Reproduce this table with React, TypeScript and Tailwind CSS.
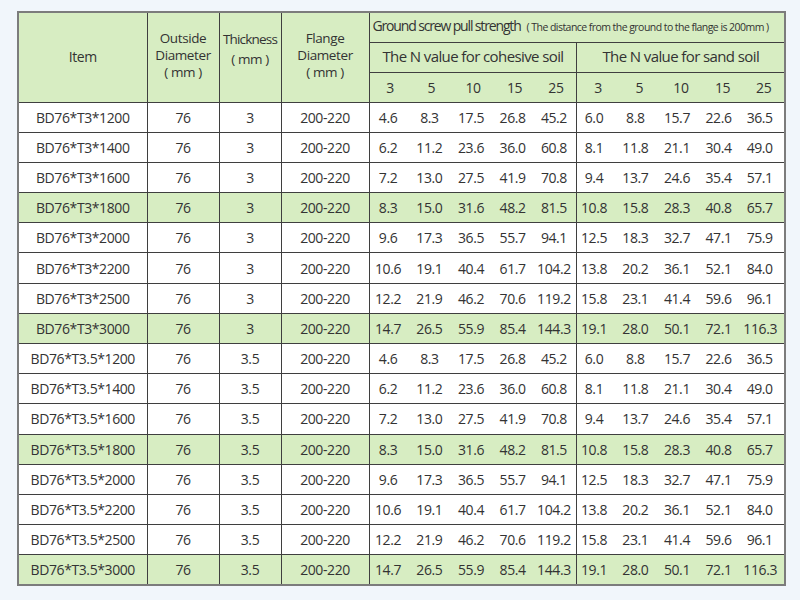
import * as React from 'react';

type Row = {
  item: string;
  thickness: string;
  cohesive: string[];
  sand: string[];
  highlight?: boolean;
};

// Pull strength values per pile length, same for both wall thicknesses
const values: { len: string; cohesive: string[]; sand: string[] }[] = [
  { len: '1200', cohesive: ['4.6', '8.3', '17.5', '26.8', '45.2'], sand: ['6.0', '8.8', '15.7', '22.6', '36.5'] },
  { len: '1400', cohesive: ['6.2', '11.2', '23.6', '36.0', '60.8'], sand: ['8.1', '11.8', '21.1', '30.4', '49.0'] },
  { len: '1600', cohesive: ['7.2', '13.0', '27.5', '41.9', '70.8'], sand: ['9.4', '13.7', '24.6', '35.4', '57.1'] },
  { len: '1800', cohesive: ['8.3', '15.0', '31.6', '48.2', '81.5'], sand: ['10.8', '15.8', '28.3', '40.8', '65.7'] },
  { len: '2000', cohesive: ['9.6', '17.3', '36.5', '55.7', '94.1'], sand: ['12.5', '18.3', '32.7', '47.1', '75.9'] },
  { len: '2200', cohesive: ['10.6', '19.1', '40.4', '61.7', '104.2'], sand: ['13.8', '20.2', '36.1', '52.1', '84.0'] },
  { len: '2500', cohesive: ['12.2', '21.9', '46.2', '70.6', '119.2'], sand: ['15.8', '23.1', '41.4', '59.6', '96.1'] },
  { len: '3000', cohesive: ['14.7', '26.5', '55.9', '85.4', '144.3'], sand: ['19.1', '28.0', '50.1', '72.1', '116.3'] },
];

const rows: Row[] = ['3', '3.5'].flatMap((t) =>
  values.map((v) => ({
    item: `BD76*T${t}*${v.len}`,
    thickness: t,
    cohesive: v.cohesive,
    sand: v.sand,
    highlight: v.len === '1800' || v.len === '3000',
  }))
);

const nValues = ['3', '5', '10', '15', '25'];

const line = 'border-[#3f3f3f]';
const green = 'bg-[#d7edc2]';

export default function App() {
  return (
    <div className="min-h-[600px] w-[800px] bg-[#f1f6fb] pl-[17px] pt-[11px] font-['Open_Sans',sans-serif] text-[#333]">
      <table className="w-[767px] table-fixed border-collapse border-2 border-[#7c7c7c] text-[14px] tracking-[-0.4px]">
        <colgroup>
          <col className="w-[129px]" />
          <col className="w-[72px]" />
          <col className="w-[62px]" />
          <col className="w-[88px]" />
          {Array.from({ length: 10 }).map((_, i) => (
            <col key={i} className="w-[41.6px]" />
          ))}
        </colgroup>
        <thead className={green}>
          <tr className="h-[30px]">
            <th rowSpan={3} className={`border ${line} pb-[2px] text-center font-normal`}>
              Item
            </th>
            <th rowSpan={3} className={`border ${line} pb-[4px] text-center text-[13.5px] font-normal leading-[17px]`}>
              Outside
              <br />
              Diameter
              <br />( mm )
            </th>
            <th rowSpan={3} className={`border ${line} pb-[16px] text-center text-[13.5px] font-normal leading-[20px]`}>
              <span className="tracking-[-0.8px]">Thickness</span>
              <br />( mm )
            </th>
            <th rowSpan={3} className={`border ${line} pb-[4px] text-center text-[13.5px] font-normal leading-[17px]`}>
              Flange
              <br />
              Diameter
              <br />( mm )
            </th>
            <th colSpan={10} className={`border ${line} whitespace-nowrap pb-[4px] pl-[3px] text-left font-normal`}>
              <span className="text-[14px] tracking-[-1.15px]">Ground screw pull strength</span>
              <span className="ml-[6px] text-[10.5px] tracking-[-0.55px]">( The distance from the ground to the flange is 200mm )</span>
            </th>
          </tr>
          <tr className="h-[30px]">
            <th colSpan={5} className={`border ${line} pb-[2px] text-center text-[15px] font-normal tracking-[-0.6px]`}>
              The N value for cohesive soil
            </th>
            <th colSpan={5} className={`border ${line} pb-[2px] text-center text-[15px] font-normal tracking-[-0.6px]`}>
              The N value for sand soil
            </th>
          </tr>
          <tr className="h-[30px]">
            {[...nValues, ...nValues].map((n, i) => (
              <th
                key={i}
                className={`border-y ${line} text-center font-normal ${i === 0 || i === 5 ? `border-l ${line}` : ''} ${i === 9 ? `border-r ${line}` : ''}`}
              >
                {n}
              </th>
            ))}
          </tr>
        </thead>
        <tbody>
          {rows.map((r) => (
            <tr key={r.item} className={`h-[30.2px] ${r.highlight ? green : 'bg-white'}`}>
              <td className={`border ${line} text-center`}>{r.item}</td>
              <td className={`border ${line} text-center`}>76</td>
              <td className={`border ${line} text-center`}>{r.thickness}</td>
              <td className={`border ${line} text-center`}>200-220</td>
              {r.cohesive.map((v, i) => (
                <td
                  key={`c${i}`}
                  className={`whitespace-nowrap border-y ${line} pr-[4px] text-center ${i === 0 ? `border-l ${line}` : ''}`}
                >
                  {v}
                </td>
              ))}
              {r.sand.map((v, i) => (
                <td
                  key={`s${i}`}
                  className={`whitespace-nowrap border-y ${line} pr-[8px] text-center ${i === 0 ? `border-l ${line}` : ''} ${i === 4 ? `border-r ${line}` : ''}`}
                >
                  {v}
                </td>
              ))}
            </tr>
          ))}
        </tbody>
      </table>
    </div>
  );
}
